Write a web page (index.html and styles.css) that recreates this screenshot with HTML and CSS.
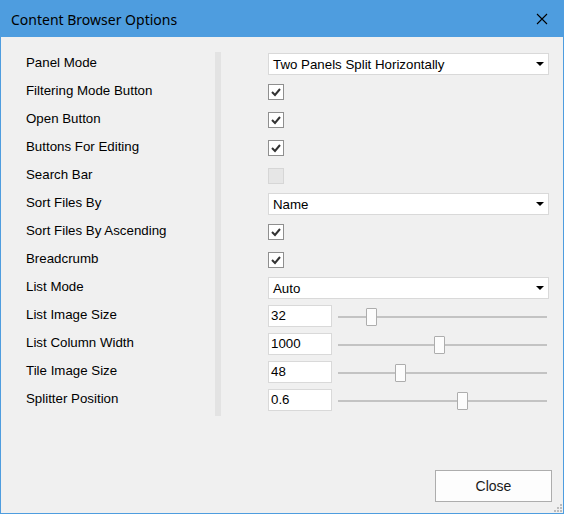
FILE: index.html
```html
<!DOCTYPE html>
<html>
<head>
<meta charset="utf-8">
<link rel="stylesheet" href="styles.css">
</head>
<body>
<div class="window">
  <div class="titlebar">
    <span class="title">Content Browser Options</span>
    <svg class="close-x" width="12" height="12" viewBox="0 0 12 12"><path d="M1 1L11 11M11 1L1 11" stroke="#000" stroke-width="1.1"/></svg>
  </div>
  <div class="content">
    <div class="grid">
      <div class="sep"></div>

      <div class="label">Panel Mode</div>
      <div class="ctl"><div class="combo"><span>Two Panels Split Horizontally</span><i class="arrow"></i></div></div>

      <div class="label">Filtering Mode Button</div>
      <div class="ctl"><span class="check on"><svg viewBox="0 0 14 14"><path d="M3 7L6 10L11 4" fill="none" stroke="#333" stroke-width="2"/></svg></span></div>

      <div class="label">Open Button</div>
      <div class="ctl"><span class="check on"><svg viewBox="0 0 14 14"><path d="M3 7L6 10L11 4" fill="none" stroke="#333" stroke-width="2"/></svg></span></div>

      <div class="label">Buttons For Editing</div>
      <div class="ctl"><span class="check on"><svg viewBox="0 0 14 14"><path d="M3 7L6 10L11 4" fill="none" stroke="#333" stroke-width="2"/></svg></span></div>

      <div class="label">Search Bar</div>
      <div class="ctl"><span class="check disabled"></span></div>

      <div class="label">Sort Files By</div>
      <div class="ctl"><div class="combo"><span>Name</span><i class="arrow"></i></div></div>

      <div class="label">Sort Files By Ascending</div>
      <div class="ctl"><span class="check on"><svg viewBox="0 0 14 14"><path d="M3 7L6 10L11 4" fill="none" stroke="#333" stroke-width="2"/></svg></span></div>

      <div class="label">Breadcrumb</div>
      <div class="ctl"><span class="check on"><svg viewBox="0 0 14 14"><path d="M3 7L6 10L11 4" fill="none" stroke="#333" stroke-width="2"/></svg></span></div>

      <div class="label">List Mode</div>
      <div class="ctl"><div class="combo"><span>Auto</span><i class="arrow"></i></div></div>

      <div class="label">List Image Size</div>
      <div class="ctl"><div class="num">32</div><div class="slider"><div class="track"></div><div class="thumb" style="left:28px"></div></div></div>

      <div class="label">List Column Width</div>
      <div class="ctl"><div class="num">1000</div><div class="slider"><div class="track"></div><div class="thumb" style="left:96px"></div></div></div>

      <div class="label">Tile Image Size</div>
      <div class="ctl"><div class="num">48</div><div class="slider"><div class="track"></div><div class="thumb" style="left:57px"></div></div></div>

      <div class="label">Splitter Position</div>
      <div class="ctl"><div class="num">0.6</div><div class="slider"><div class="track"></div><div class="thumb" style="left:119px"></div></div></div>
    </div>
    <div class="footer">
      <div class="button">Close</div>
    </div>
    <svg class="grip" width="8" height="8" viewBox="0 0 8 8"><rect x="6" y="0" width="2" height="2" fill="#bcbcbc"/><rect x="3" y="3" width="2" height="2" fill="#bcbcbc"/><rect x="6" y="3" width="2" height="2" fill="#bcbcbc"/><rect x="0" y="6" width="2" height="2" fill="#bcbcbc"/><rect x="3" y="6" width="2" height="2" fill="#bcbcbc"/><rect x="6" y="6" width="2" height="2" fill="#bcbcbc"/></svg>
  </div>
</div>
</body>
</html>
```

FILE: styles.css
```css
* { box-sizing: border-box; }
html, body { margin: 0; padding: 0; }
body {
  width: 564px;
  height: 514px;
  font-family: "Liberation Sans", Arial, sans-serif;
  font-size: 13.3px;
  color: #000;
  background: #f0f0f0;
}
.window {
  width: 564px;
  height: 514px;
  display: flex;
  flex-direction: column;
  border: 1px solid #4e9ddf;
  border-top: none;
  background: #f0f0f0;
}
.titlebar {
  height: 37px;
  margin: 0 -1px;
  background: #4e9ddf;
  display: flex;
  align-items: center;
  justify-content: space-between;
  padding: 0 16px 0 11px;
}
.title {
  font-family: "Noto Sans", "Open Sans", sans-serif;
  font-size: 14px;
  color: #000;
  padding-top: 1px;
}
.close-x { display: block; margin-top: 1px; }
.content {
  flex: 1;
  position: relative;
  display: flex;
  flex-direction: column;
  padding: 13px 11px 11px 25px;
}
.grid {
  display: grid;
  grid-template-columns: 189px 6px 47px 281px;
  grid-auto-rows: 28px;
}
.sep {
  grid-column: 2;
  grid-row: 1 / span 13;
  background: #e3e3e3;
  margin-top: 2px;
  margin-bottom: -2px;
}
.label {
  grid-column: 1;
  display: flex;
  align-items: center;
  padding-bottom: 3px;
  white-space: nowrap;
}
.ctl {
  grid-column: 4;
  display: flex;
  align-items: center;
}
.combo {
  width: 281px;
  height: 22px;
  background: #fff;
  border: 1px solid #d9d9d9;
  display: flex;
  align-items: center;
  justify-content: space-between;
  padding: 0 4px 0 4px;
}
.arrow {
  width: 0;
  height: 0;
  border-left: 4px solid transparent;
  border-right: 4px solid transparent;
  border-top: 4px solid #000;
}
.check {
  width: 16px;
  height: 16px;
  border: 1px solid #8f8f8f;
  background: #fff;
  display: flex;
  align-items: center;
  justify-content: center;
}
.check svg { width: 14px; height: 14px; display: block; }
.check.disabled {
  background: #e6e6e6;
  border-color: #d6d6d6;
}
.num {
  width: 64px;
  height: 22px;
  background: #fff;
  border: 1px solid #d9d9d9;
  padding: 2px 0 0 2px;
  line-height: 16px;
}
.slider {
  position: relative;
  width: 209px;
  height: 22px;
  margin-left: 6px;
}
.track {
  position: absolute;
  left: 0;
  right: 0;
  top: 11px;
  height: 2px;
  background: #c3c3c3;
}
.thumb {
  position: absolute;
  top: 3px;
  width: 11px;
  height: 18px;
  background: #fcfcfc;
  border: 1px solid #adadad;
  border-radius: 1px;
}
.footer {
  margin-top: auto;
  display: flex;
  justify-content: flex-end;
}
.button {
  width: 117px;
  height: 32px;
  border: 1px solid #adadad;
  background: #fdfdfd;
  display: flex;
  align-items: center;
  justify-content: center;
  font-size: 14px;
  color: #1a1a1a;
}
.grip {
  position: absolute;
  right: 1px;
  bottom: 1px;
}
```
